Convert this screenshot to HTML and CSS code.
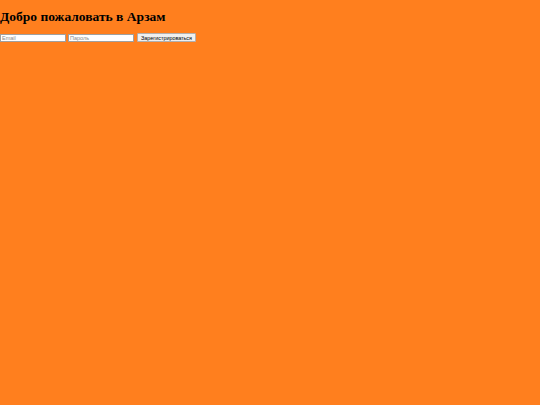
FILE: index.html
```html
<!DOCTYPE html>
<html lang="ru">
<head>
<meta charset="utf-8">
<title>Арзам</title>
<link rel="stylesheet" href="styles.css">
</head>
<body>
<h1 class="title">Добро пожаловать в Арзам</h1>
<form class="signup">
<input class="field" type="email" placeholder="Email">
<input class="field" type="password" placeholder="Пароль">
<button class="submit" type="button">Зарегистрироваться</button>
</form>
</body>
</html>
```

FILE: styles.css
```css
html, body {
  margin: 0;
  background: #ff7f1e;
}
body {
  font-family: "Liberation Serif", serif;
  color: #000;
}
.title {
  margin: 9px 0 0;
  font-size: 13.5px;
  font-weight: bold;
  line-height: 16px;
}
.signup {
  display: flex;
  gap: 2px;
  margin-top: 8px;
  align-items: center;
}
.field {
  box-sizing: border-box;
  width: 66px;
  height: 8px;
  margin: 0;
  padding: 0 1px;
  border: 1px solid #a0a0a0;
  border-radius: 0;
  background: #fff;
  font-family: "Liberation Sans", sans-serif;
  font-size: 5.5px;
  line-height: 6px;
}
.field::placeholder {
  color: #8a8a8a;
}
.submit {
  box-sizing: border-box;
  width: 59px;
  height: 9px;
  margin: 0 0 0 1px;
  padding: 0;
  border: 1px solid #b0b0b0;
  border-radius: 1px;
  background: #efefef;
  font-family: "Liberation Sans", sans-serif;
  font-size: 5.4px;
  line-height: 6px;
  color: #000;
  white-space: nowrap;
}
```
